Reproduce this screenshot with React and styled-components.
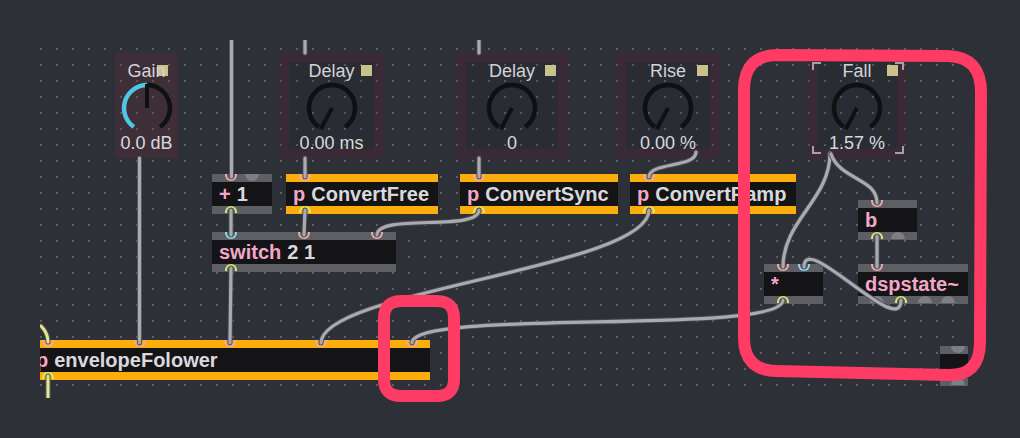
import React from "react";
import styled, { createGlobalStyle, css } from "styled-components";

const GlobalStyle = createGlobalStyle`
  html, body {
    margin: 0;
    padding: 0;
    background: #2e3038;
  }
  body {
    font-family: "Liberation Sans", Arial, sans-serif;
    overflow: hidden;
  }
`;

const colors = {
  bg: "#2e3038",
  dot: "#5d5f66",
  band: "#5e5f64",
  orange: "#fbad0b",
  body: "#141417",
  text: "#d9d9dd",
  pink: "#f3a7c6",
  inPink: "#f2a8a6",
  cyan: "#86d9ea",
  yg: "#d6e878",
  port: "#7e7f85",
  knob: "#0f1012",
  knobCyan: "#4cc8e4",
  square: "#c9c28c",
  red: "#fe3b64",
};

const Screen = styled.div`
  position: relative;
  width: 1020px;
  height: 438px;
  background: ${colors.bg};
  overflow: hidden;
`;

// patcher view, clipped: grid dots every 16px
const PatcherView = styled.div`
  position: absolute;
  left: 40px;
  top: 40px;
  width: 928px;
  height: 358px;
  overflow: hidden;
  background-image: radial-gradient(circle at center, ${colors.dot} 0.9px, transparent 1.4px);
  background-size: 16px 16px;
  background-position: -7px 1px;
`;

const Panel = styled.div`
  position: absolute;
  left: ${(p) => p.$x}px;
  top: ${(p) => p.$y}px;
  width: ${(p) => p.$w}px;
  height: 105px;
  box-sizing: border-box;
  display: flex;
  flex-direction: column;
  align-items: center;
  padding-top: 8px;
  ${(p) =>
    p.$filled
      ? css`
          background: rgba(110, 40, 60, 0.24);
        `
      : css`
          background: rgba(0, 0, 0, 0.08);
          box-shadow: inset 0 0 0 9px rgba(110, 40, 60, 0.26);
        `}
`;

const Label = styled.span`
  position: relative;
  z-index: 1;
  font-size: 18px;
  line-height: 20px;
  color: #d3d3d7;
  white-space: nowrap;
`;

const Square = styled.span`
  position: absolute;
  top: 12px;
  right: ${(p) => p.$right}px;
  width: 11px;
  height: 11px;
  background: ${colors.square};
`;

const Value = styled.span`
  font-size: 18px;
  line-height: 20px;
  margin-top: -1px;
  color: #d8d8dc;
  white-space: nowrap;
`;

const DialSvg = styled.svg`
  display: block;
  margin-top: 1px;
  overflow: visible;
`;

const Bracket = styled.span`
  position: absolute;
  width: 7px;
  height: 6px;
  border-color: #a2a3a8;
  border-style: solid;
  border-width: 0;
  ${(p) => (p.$top ? "top: 9px; border-top-width: 2px;" : "bottom: 4px; border-bottom-width: 2px;")}
  ${(p) => (p.$left ? "left: 4px; border-left-width: 2px;" : "right: 2px; border-right-width: 2px;")}
`;

const ObjBox = styled.div`
  position: absolute;
  left: ${(p) => p.$x}px;
  top: ${(p) => p.$y}px;
  width: ${(p) => p.$w}px;
  height: 40px;
  box-sizing: border-box;
  border-top: 8px solid ${(p) => (p.$sub ? colors.orange : colors.band)};
  border-bottom: 8px solid ${(p) => (p.$sub ? colors.orange : colors.band)};
  background: ${colors.body};
  display: flex;
  align-items: center;
  gap: 6px;
  padding-left: 7px;
  font-weight: bold;
  font-size: 20px;
  line-height: 24px;
  color: ${colors.text};
  white-space: nowrap;
`;

const Name = styled.span`
  color: ${colors.pink};
`;

const Port = styled.span`
  position: absolute;
  box-sizing: border-box;
  ${(p) =>
    p.$filled
      ? css`
          left: ${p.$x - 7}px;
          width: 14px;
          height: 7px;
          background: ${colors.port};
        `
      : css`
          left: ${p.$x - 6}px;
          width: 12px;
          height: 7px;
          border: 2px solid ${p.$color};
        `}
  ${(p) =>
    p.$in
      ? css`
          top: -8px;
          border-top: none;
          border-radius: 0 0 7px 7px;
        `
      : css`
          top: 24px;
          border-bottom: none;
          border-radius: 7px 7px 0 0;
        `}
`;

const Layer = styled.svg`
  position: absolute;
  left: 0;
  top: 0;
  pointer-events: none;
`;

const polar = (cx, cy, r, a) => {
  const t = (a * Math.PI) / 180;
  return [cx + r * Math.sin(t), cy - r * Math.cos(t)];
};

const arc = (cx, cy, r, a1, a2) => {
  const [x1, y1] = polar(cx, cy, r, a1);
  const [x2, y2] = polar(cx, cy, r, a2);
  const large = a2 - a1 > 180 ? 1 : 0;
  return `M${x1.toFixed(2)},${y1.toFixed(2)} A${r},${r} 0 ${large} 1 ${x2.toFixed(2)},${y2.toFixed(2)}`;
};

const Dial = ({ needle = 208, cyan = false }) => {
  const c = 26;
  const r = 23;
  const [nx, ny] = polar(c, c, r + 1, needle);
  return (
    <DialSvg width="52" height="52" viewBox="0 0 52 52">
      {cyan ? (
        <>
          <path d={arc(c, c, r, 215, 360)} stroke={colors.knobCyan} strokeWidth="4.5" fill="none" />
          <path d={arc(c, c, r, 360, 505)} stroke={colors.knob} strokeWidth="4.5" fill="none" />
        </>
      ) : (
        <path d={arc(c, c, r, 215, 505)} stroke={colors.knob} strokeWidth="4.5" fill="none" />
      )}
      <line x1={c} y1={c} x2={nx} y2={ny} stroke={colors.knob} strokeWidth="4" />
    </DialSvg>
  );
};

const panels = [
  { id: "gain", x: 75, y: 13, w: 63, label: "Gain", value: "0.0 dB", filled: true, cyan: true, needle: 0, sq: 10 },
  { id: "delay1", x: 240, y: 13, w: 103, label: "Delay", value: "0.00 ms", sq: 11 },
  { id: "delay2", x: 417, y: 13, w: 110, label: "Delay", value: "0", sq: 11 },
  { id: "rise", x: 577, y: 13, w: 102, label: "Rise", value: "0.00 %", sq: 11 },
  { id: "fall", x: 768, y: 13, w: 98, label: "Fall", value: "1.57 %", sq: 8, brackets: true },
];

const objects = [
  { id: "plus", x: 172, y: 134, w: 60, name: "+", args: "1", ins: [{ x: 19, c: "inPink" }, { x: 40, f: true }], outs: [{ x: 19, c: "yg" }] },
  { id: "free", x: 246, y: 134, w: 152, sub: true, name: "p", args: "ConvertFree", ins: [{ x: 19, c: "inPink" }], outs: [{ x: 19, c: "yg" }] },
  { id: "sync", x: 420, y: 134, w: 158, sub: true, name: "p", args: "ConvertSync", ins: [{ x: 19, c: "inPink" }], outs: [{ x: 19, c: "yg" }] },
  { id: "ramp", x: 590, y: 134, w: 166, sub: true, name: "p", args: "ConvertRamp", ins: [{ x: 19, c: "inPink" }], outs: [{ x: 19, c: "yg" }] },
  { id: "switch", x: 172, y: 192, w: 184, name: "switch", args: "2 1", ins: [{ x: 19, c: "cyan" }, { x: 92, c: "inPink" }, { x: 165, c: "inPink" }], outs: [{ x: 19, c: "yg" }] },
  { id: "b", x: 818, y: 160, w: 59, name: "b", ins: [{ x: 19, c: "inPink" }], outs: [{ x: 19, c: "yg" }, { x: 40, f: true }] },
  { id: "mul", x: 724, y: 224, w: 59, name: "*", ins: [{ x: 19, c: "inPink" }, { x: 40, c: "cyan" }], outs: [{ x: 19, c: "yg" }] },
  { id: "dsp", x: 818, y: 224, w: 110, name: "dspstate~", ins: [{ x: 19, c: "inPink" }], outs: [{ x: 19, f: true }, { x: 43, c: "yg" }, { x: 67, f: true }, { x: 90, f: true }] },
  { id: "small", x: 900, y: 306, w: 28, ins: [{ x: 18, f: true }], outs: [{ x: 18, f: true }] },
  {
    id: "env", x: -11, y: 300, w: 401, sub: true, name: "p", args: "envelopeFolower",
    ins: [19, 111, 201, 292, 383].map((x) => ({ x, c: "inPink" })),
    outs: [{ x: 19, c: "yg" }],
  },
];

const cords = [
  "M191.5,0 L191.5,137",
  "M265,0 L265,13",
  "M439,0 L439,13",
  "M265,118 L265,137",
  "M439,118 L439,137",
  "M656,112 C656,128 609,122 609,137",
  "M99.5,118 L99.5,303",
  "M191,170 L191,195",
  "M265,170 L264,195",
  "M439,170 C439,192 337,173 337,195",
  "M191,228 L190,303",
  "M609,170 C609,228 281,250 281,303",
  "M743,260 C743,296 372,268 372,303",
  "M790,113 C790,160 743,180 743,227",
  "M791,114 C800,140 837,138 837,163",
  "M837,196 L837,227",
  "M861,260 C861,300 764,190 764,227",
];

const signalCords = ["M1,286 C5,290 8,295 8,302", "M8,336 L8,360"];

const DialPanel = ({ p }) => (
  <Panel $x={p.x} $y={p.y} $w={p.w} $filled={p.filled}>
    <Square $right={p.sq} />
    <Label>{p.label}</Label>
    <Dial cyan={p.cyan} needle={p.needle ?? 208} />
    <Value>{p.value}</Value>
    {p.brackets && (
      <>
        <Bracket $top $left />
        <Bracket $top />
        <Bracket $left />
        <Bracket />
      </>
    )}
  </Panel>
);

const MaxObject = ({ o }) => (
  <ObjBox $x={o.x} $y={o.y} $w={o.w} $sub={o.sub}>
    {o.ins.map((port, i) => (
      <Port key={"i" + i} $in $x={port.x} $filled={port.f} $color={colors[port.c]} />
    ))}
    {o.outs.map((port, i) => (
      <Port key={"o" + i} $x={port.x} $filled={port.f} $color={colors[port.c]} />
    ))}
    {o.name && <Name>{o.name}</Name>}
    {o.args && <span>{o.args}</span>}
  </ObjBox>
);

export default function App() {
  return (
    <Screen>
      <GlobalStyle />
      <PatcherView>
        {panels.map((p) => (
          <DialPanel key={p.id} p={p} />
        ))}
        {objects.map((o) => (
          <MaxObject key={o.id} o={o} />
        ))}
        <Layer width="928" height="358">
          {cords.map((d, i) => (
            <g key={i} fill="none" strokeLinecap="round">
              <path d={d} stroke="#4a4c52" strokeWidth="5" />
              <path d={d} stroke="#a9abb0" strokeWidth="3.2" />
            </g>
          ))}
          {signalCords.map((d, i) => (
            <g key={i} fill="none" strokeLinecap="round">
              <path d={d} stroke="#5a5c3c" strokeWidth="5" />
              <path d={d} stroke="#e2e69a" strokeWidth="3" />
            </g>
          ))}
        </Layer>
      </PatcherView>
      <Layer width="1020" height="438">
        <g fill="none" stroke={colors.red} strokeWidth="12" strokeLinejoin="round">
          <path d="M778,55 L948,56 Q981,57 981,92 L980,342 Q980,376 948,375 L776,371 Q744,370 744,338 L744,90 Q744,55 778,55 Z" />
          <path d="M402,301 L437,301 Q454,301 454,318 L454,379 Q454,396 437,396 L401,396 Q384,396 384,379 L384,318 Q384,301 402,301 Z" />
        </g>
      </Layer>
    </Screen>
  );
}
